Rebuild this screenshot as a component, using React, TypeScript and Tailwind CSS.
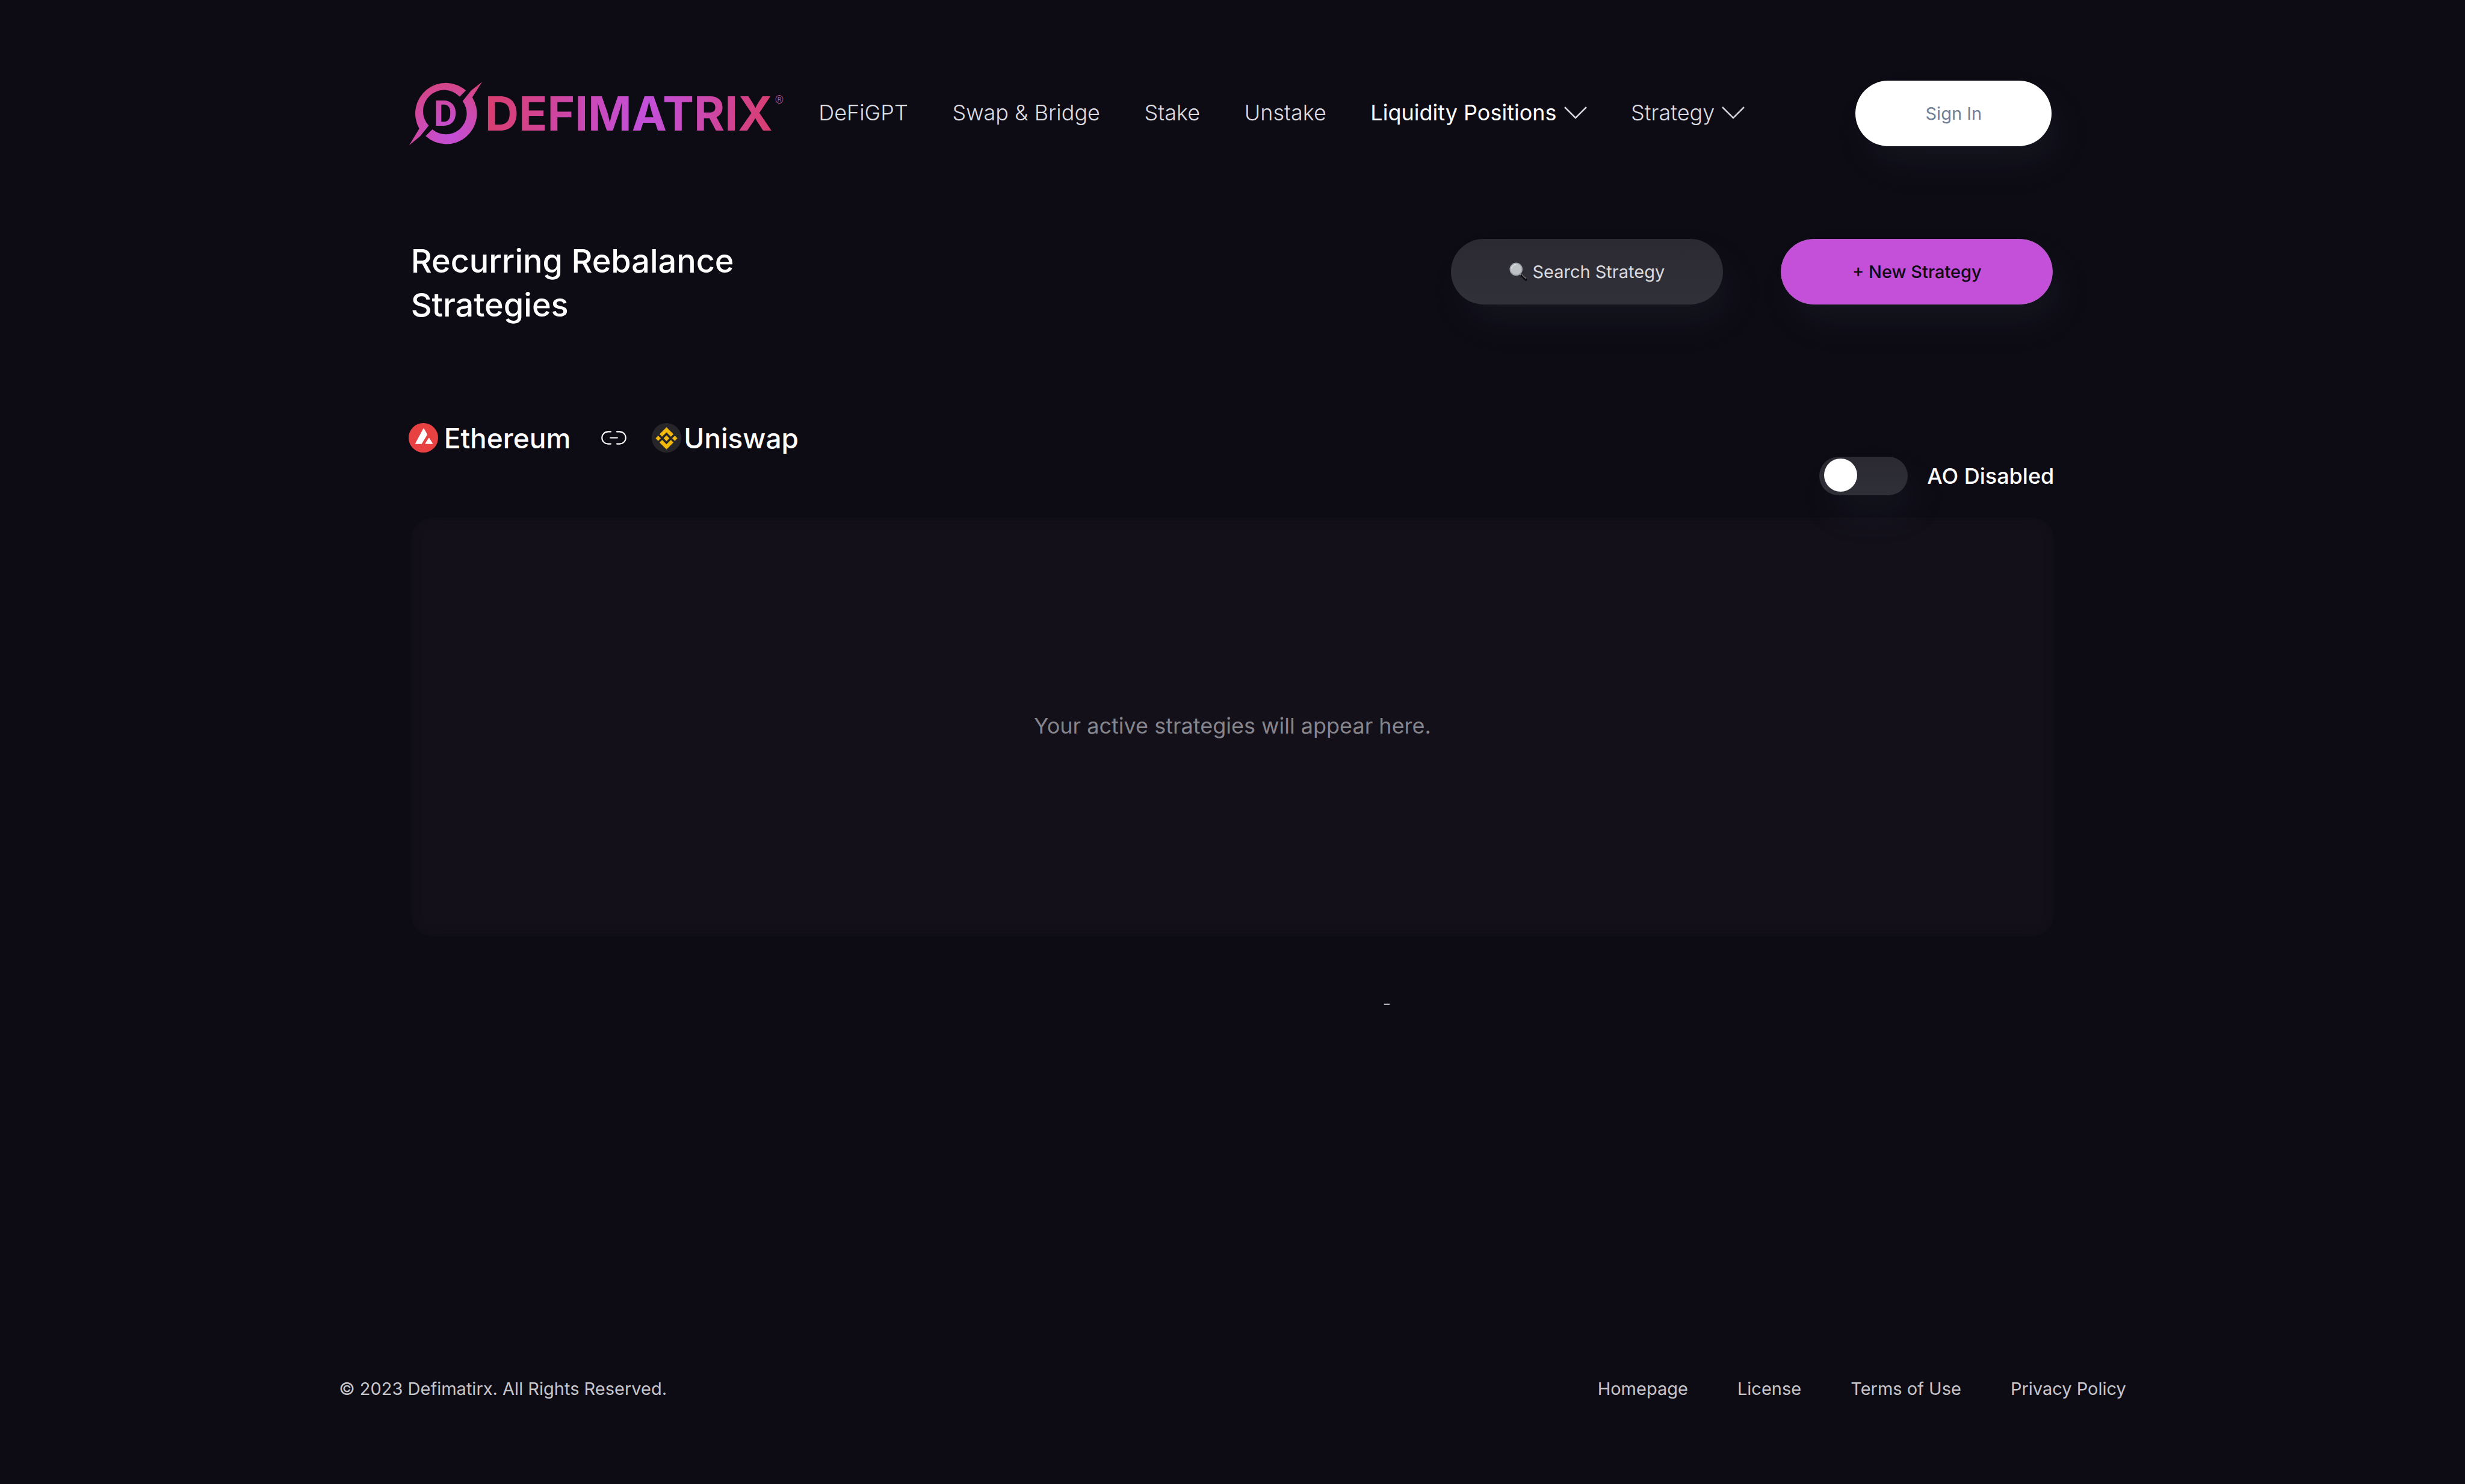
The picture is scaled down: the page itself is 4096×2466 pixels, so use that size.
const navItems = [
    { label: "DeFiGPT" },
    { label: "Swap & Bridge" },
    { label: "Stake" },
    { label: "Unstake" },
    { label: "Liquidity Positions", menu: true, active: true },
    { label: "Strategy", menu: true },
];

const footerLinks = ["Homepage", "License", "Terms of Use", "Privacy Policy"];

function Logo() {
    return (
        <a href="#" className="-ml-1 flex h-full items-center">
            <svg viewBox="14 19 144 126" className="mr-1 h-[108px] w-[123px]" aria-hidden="true">
                <defs>
                    <radialGradient id="mark" gradientUnits="userSpaceOnUse" cx="94" cy="122" r="105">
                        <stop offset="0" stopColor="#c24fdb" />
                        <stop offset="0.5" stopColor="#cb4ab4" />
                        <stop offset="1" stopColor="#d64481" />
                    </radialGradient>
                </defs>
                <g fill="url(#mark)">
                    <path d="M157 20 L135.500 37 L119 57.300 A40.500 40.500 0 0 1 60.200 112.300 L47 125.300 A59.500 59.500 0 0 0 137.800 50 Z" />
                    <path d="M15 143.500 L36.500 125.500 L53 105 A40.500 40.500 0 0 1 113.300 49 L125.500 36.700 A59.500 59.500 0 0 0 34.700 111 Z" />
                    <text x="63" y="106" fontSize="70" fontWeight="700" fontFamily="Roboto, sans-serif">D</text>
                </g>
            </svg>
            <span className="bg-[linear-gradient(98deg,#d93d6c_0%,#d2428e_18%,#cb48b4_34%,#c34fda_55%,#c74bc2_68%,#cf4499_82%,#d93d6c_100%)] bg-clip-text text-[78px] leading-none font-bold text-transparent">
                DEFIMATRIX
            </span>
            <span className="mt-[23px] ml-1 self-start font-[Roboto,sans-serif] text-[18px] leading-none font-light text-[#c8559c]">®</span>
        </a>
    );
}

function Chevron() {
    return (
        <svg viewBox="0 0 38 22" className="h-[22px] w-[38px]" fill="none" stroke="#d3d2d6" strokeWidth="2.500" aria-hidden="true">
            <path d="M1 2 L19 20 L37 2" />
        </svg>
    );
}

function Magnifier() {
    return (
        <svg viewBox="0 0 36 37" className="h-[31px] w-[30px]" aria-hidden="true">
            <path d="M22 23 L26 27" stroke="#8a8d92" strokeWidth="3" />
            <path d="M25 26 L33 34.500" stroke="#0e0e11" strokeWidth="5" strokeLinecap="round" />
            <path d="M25 24 L33.500 32.500" stroke="#8d8e93" strokeWidth="1.500" />
            <circle cx="13.500" cy="13.500" r="12" fill="#bfc2c5" stroke="#9aa0a6" strokeWidth="2" />
            <path d="M4 13 A10 10 0 0 1 14 4" fill="none" stroke="#d8dadc" strokeWidth="2" />
        </svg>
    );
}

function AvalancheIcon() {
    return (
        <svg viewBox="0 0 57 57" className="size-[49px]" aria-hidden="true">
            <circle cx="28.500" cy="28.500" r="28.500" fill="#e84142" />
            <g fill="#fff" stroke="#fff" strokeWidth="2" strokeLinejoin="round">
                <path d="M29 11.500 L34 20 Q35 22 34 24 L24.500 39.500 L14 39.500 Z" />
                <path d="M39.300 29.800 L45.400 39.500 L33.200 39.500 Z" />
            </g>
        </svg>
    );
}

function BinanceIcon() {
    return (
        <svg viewBox="0 0 57 57" className="size-[49px]" aria-hidden="true">
            <circle cx="28.500" cy="28.500" r="28.500" fill="#26262a" />
            <g fill="#f0b90b">
                <path d="M28.500 8 L42 21.500 L37 26.500 L28.500 18 L20 26.500 L15 21.500 Z" />
                <path d="M28.500 51 L42 37.500 L37 32.500 L28.500 41 L20 32.500 L15 37.500 Z" />
                <path d="M28.500 23.800 L34.200 29.500 L28.500 35.200 L22.800 29.500 Z" />
                <path d="M12.500 24.500 L17.500 29.500 L12.500 34.500 L7.500 29.500 Z" />
                <path d="M44.500 24.500 L49.500 29.500 L44.500 34.500 L39.500 29.500 Z" />
            </g>
        </svg>
    );
}

function LinkIcon() {
    return (
        <svg viewBox="0 0 50 27" className="h-[23px] w-[42px]" fill="none" stroke="#fff" strokeWidth="2.500" strokeLinecap="round" aria-hidden="true">
            <path d="M19 1.500 H13.500 A12 12 0 0 0 13.500 25.500 H19" />
            <path d="M31 1.500 H36.500 A12 12 0 0 1 36.500 25.500 H31" />
            <path d="M18 13.500 H32" />
        </svg>
    );
}

export default function App() {
    return (
        <div className="flex min-h-screen flex-col bg-[#0d0b14] font-[Inter,sans-serif] text-white">
            <header className="mx-auto mt-[134px] flex h-[109px] w-2/3 items-center">
                <Logo />
                <nav className="ml-[58px] flex-1 pb-1">
                    <ul className="flex items-center justify-between text-[36px] leading-none font-light text-[#dddce0]">
                        {navItems.map((item) => (
                            <li key={item.label}>
                                <a href="#" className={item.active ? "flex items-center gap-3 font-normal text-white" : "flex items-center gap-3"}>
                                    {item.label}
                                    {item.menu && <Chevron />}
                                </a>
                            </li>
                        ))}
                    </ul>
                </nav>
                <button type="button" className="mr-1 ml-[184px] h-full w-[326px] rounded-full bg-white text-[29px] text-[#718096] shadow-[16px_32px_60px_#5a7a9616]">
                    Sign In
                </button>
            </header>

            <main className="mx-auto mt-[154px] w-2/3">
                <div className="flex items-start justify-between">
                    <h1 className="w-[600px] text-[54px] leading-[73px] font-medium">Recurring Rebalance Strategies</h1>
                    <div className="mr-0.5 flex gap-24 text-[29px]">
                        <button type="button" className="flex h-[109px] w-[452px] items-center justify-center gap-2 rounded-full bg-linear-to-b from-[#2b2a33] to-[#313139] text-[#dbdadd] shadow-[16px_32px_60px_#5a7a9616]">
                            <Magnifier />
                            Search Strategy
                        </button>
                        <button type="button" className="h-[109px] w-[452px] rounded-full border border-[#b65cc6] bg-[#c44fd8] font-medium text-[#0d0b14] shadow-[16px_32px_60px_#5a7a9616]">
                            + New Strategy
                        </button>
                    </div>
                </div>

                <div className="mt-[160px] -ml-1 flex h-[49px] items-center text-[46px] leading-none font-medium">
                    <div className="flex items-center gap-2.5">
                        <AvalancheIcon />
                        Ethereum
                    </div>
                    <div className="mr-[42px] ml-[51px]">
                        <LinkIcon />
                    </div>
                    <div className="flex items-center gap-1">
                        <BinanceIcon />
                        Uniswap
                    </div>
                </div>

                <div className="mt-[7px] flex justify-end">
                    <label className="flex items-center gap-8 text-[36px] leading-none font-medium">
                        <input
                            type="checkbox"
                            className="flex h-16 w-[147px] cursor-pointer appearance-none items-center rounded-full bg-linear-to-b from-[#2b2a33] to-[#2f2f37] px-2 pb-1 shadow-[16px_32px_60px_#5a7a9616] before:size-[55px] before:rounded-full before:bg-white checked:before:ml-auto"
                        />
                        AO Disabled
                    </label>
                </div>

                <section className="mt-[37px] flex h-[696px] items-center justify-center rounded-[36px] bg-[#13101a] pb-1 shadow-[inset_0_0_16px_#0d0b1499]">
                    <p className="text-[36px] text-[#87858c]">Your active strategies will appear here.</p>
                </section>
                <p className="mt-[94px] ml-[59%] pl-1 text-[29px] leading-9 text-[#b0aeb6]">-</p>
            </main>

            <footer className="mx-auto mt-auto mb-[138px] flex w-[72.5%] items-center justify-between text-[29px] leading-10 text-[#c6c5c9]">
                <p>© 2023 Defimatirx. All Rights Reserved.</p>
                <ul className="flex gap-[82px]">
                    {footerLinks.map((link) => (
                        <li key={link}>
                            <a href="#">{link}</a>
                        </li>
                    ))}
                </ul>
            </footer>
        </div>
    );
}
